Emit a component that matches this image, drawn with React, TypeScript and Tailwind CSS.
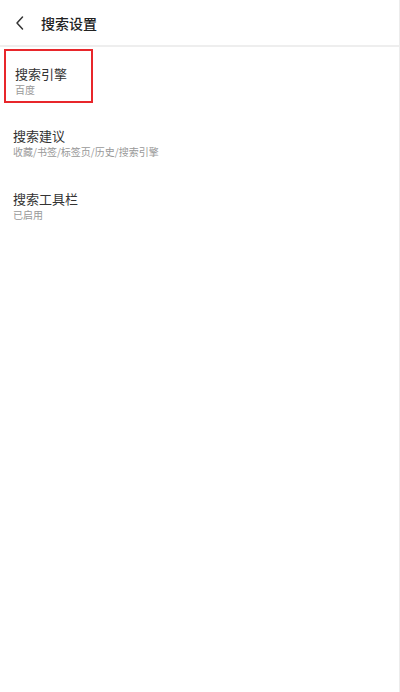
import React from 'react';

const items = [
  { title: '搜索引擎', sub: '百度', highlight: true },
  { title: '搜索建议', sub: '收藏/书签/标签页/历史/搜索引擎' },
  { title: '搜索工具栏', sub: '已启用' },
];

export default function App() {
  return (
    <div
      className="w-[400px] h-[692px] bg-white border-r border-[#ececec] overflow-hidden"
      style={{ fontFamily: '"Noto Sans CJK SC", "Noto Sans", sans-serif' }}
    >
      <div className="h-[47px] flex items-center border-b-2 border-[#eeeeee]">
        <svg className="ml-[14px] w-[12px] h-[16px]" viewBox="0 0 12 16" fill="none">
          <path d="M8.5 2 L3 8 L8.5 14" stroke="#333" strokeWidth="1.5" strokeLinecap="round" strokeLinejoin="round" />
        </svg>
        <h1 className="ml-[15px] text-[14px] font-medium text-[#222] leading-none">搜索设置</h1>
      </div>
      <div className="pt-[2px]">
        {items.map((it) => (
          <div key={it.title} className="h-[63.5px]">
            <div
              className={`ml-[4px] w-[89px] h-[54px] pl-[9px] pt-[14px] flex flex-col ${
                it.highlight ? 'border-2 border-[#e8262b] pl-[7px] pt-[12px]' : ''
              }`}
            >
              <div className="text-[13px] leading-[17px] text-[#333] whitespace-nowrap">{it.title}</div>
              <div className="mt-[1px] text-[10px] leading-[14px] text-[#999] whitespace-nowrap">{it.sub}</div>
            </div>
          </div>
        ))}
      </div>
    </div>
  );
}
